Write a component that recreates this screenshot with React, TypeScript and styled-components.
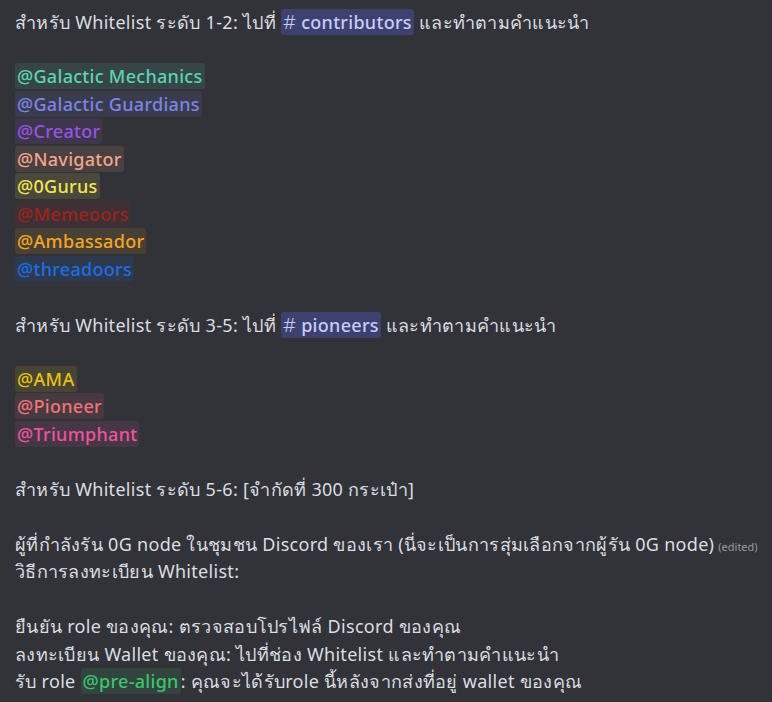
import React from "react";
import styled, { createGlobalStyle } from "styled-components";

const Global = createGlobalStyle`
  html, body { margin: 0; padding: 0; background: #313338; }
  body { font-family: "Noto Sans", "Open Sans", sans-serif; }
`;

const Page = styled.div`
  min-height: 702px;
  background: #313338;
  padding: 8px 15px 0 15px;
  box-sizing: border-box;
  color: #dbdee1;
  font-size: 18px;
  letter-spacing: 0.3px;
  overflow: hidden;
`;

const Line = styled.div`
  height: 27.5px;
  line-height: 27.5px;
  white-space: nowrap;
`;

const Mention = styled.span<{ $c: string; $bg: string }>`
  color: ${(p) => p.$c};
  background: ${(p) => p.$bg};
  border-radius: 3px;
  padding: 1px 2px;
  font-weight: 500;
`;

const Channel = styled.span`
  color: #c9cdfb;
  background: rgba(88, 101, 242, 0.3);
  border-radius: 3px;
  padding: 1px 2px;
  font-weight: 500;
`;

const Hash = styled.span`
  font-size: 20px;
  font-weight: 300;
  margin-right: 5px;
`;

const Edited = styled.span`
  font-size: 11px;
  letter-spacing: 0;
  color: #949ba4;
  margin-left: 4px;
`;

const roles1 = [
  { n: "Galactic Mechanics", c: "#5ed3b4", bg: "rgba(94, 211, 180, 0.12)" },
  { n: "Galactic Guardians", c: "#7c84e6", bg: "rgba(124, 132, 230, 0.12)" },
  { n: "Creator", c: "#9b52e0", bg: "rgba(155, 82, 224, 0.12)" },
  { n: "Navigator", c: "#f4a68a", bg: "rgba(244, 166, 138, 0.12)" },
  { n: "0Gurus", c: "#f3e651", bg: "rgba(243, 230, 81, 0.12)" },
  { n: "Memeoors", c: "#9d241e", bg: "rgba(157, 36, 30, 0.12)" },
  { n: "Ambassador", c: "#f5a623", bg: "rgba(245, 166, 35, 0.12)" },
  { n: "threadoors", c: "#1a6fe8", bg: "rgba(26, 111, 232, 0.12)" },
];

const roles2 = [
  { n: "AMA", c: "#e6c214", bg: "rgba(230, 194, 20, 0.12)" },
  { n: "Pioneer", c: "#f07478", bg: "rgba(240, 116, 120, 0.12)" },
  { n: "Triumphant", c: "#ea559f", bg: "rgba(234, 85, 159, 0.12)" },
];

export default function App() {
  return (
    <>
      <Global />
      <Page>
        <Line>
          สำหรับ Whitelist ระดับ 1-2: ไปที่ <Channel><Hash>#</Hash>contributors</Channel> และทำตามคำแนะนำ
        </Line>
        <Line />
        {roles1.map((r) => (
          <Line key={r.n}>
            <Mention $c={r.c} $bg={r.bg}>@{r.n}</Mention>
          </Line>
        ))}
        <Line />
        <Line>
          สำหรับ Whitelist ระดับ 3-5: ไปที่ <Channel><Hash>#</Hash>pioneers</Channel> และทำตามคำแนะนำ
        </Line>
        <Line />
        {roles2.map((r) => (
          <Line key={r.n}>
            <Mention $c={r.c} $bg={r.bg}>@{r.n}</Mention>
          </Line>
        ))}
        <Line />
        <Line>สำหรับ Whitelist ระดับ 5-6: [จำกัดที่ 300 กระเป๋า]</Line>
        <Line />
        <Line>
          ผู้ที่กำลังรัน 0G node ในชุมชน Discord ของเรา (นี่จะเป็นการสุ่มเลือกจากผู้รัน 0G node)
          <Edited>(edited)</Edited>
        </Line>
        <Line>วิธีการลงทะเบียน Whitelist:</Line>
        <Line />
        <Line>ยืนยัน role ของคุณ: ตรวจสอบโปรไฟล์ Discord ของคุณ</Line>
        <Line>ลงทะเบียน Wallet ของคุณ: ไปที่ช่อง Whitelist และทำตามคำแนะนำ</Line>
        <Line>
          รับ role{" "}
          <Mention $c="#3dc36e" $bg="rgba(61, 195, 110, 0.12)">@pre-align</Mention>: คุณจะได้รับrole นี้หลังจากส่งที่อยู่ wallet ของคุณ
        </Line>
      </Page>
    </>
  );
}
